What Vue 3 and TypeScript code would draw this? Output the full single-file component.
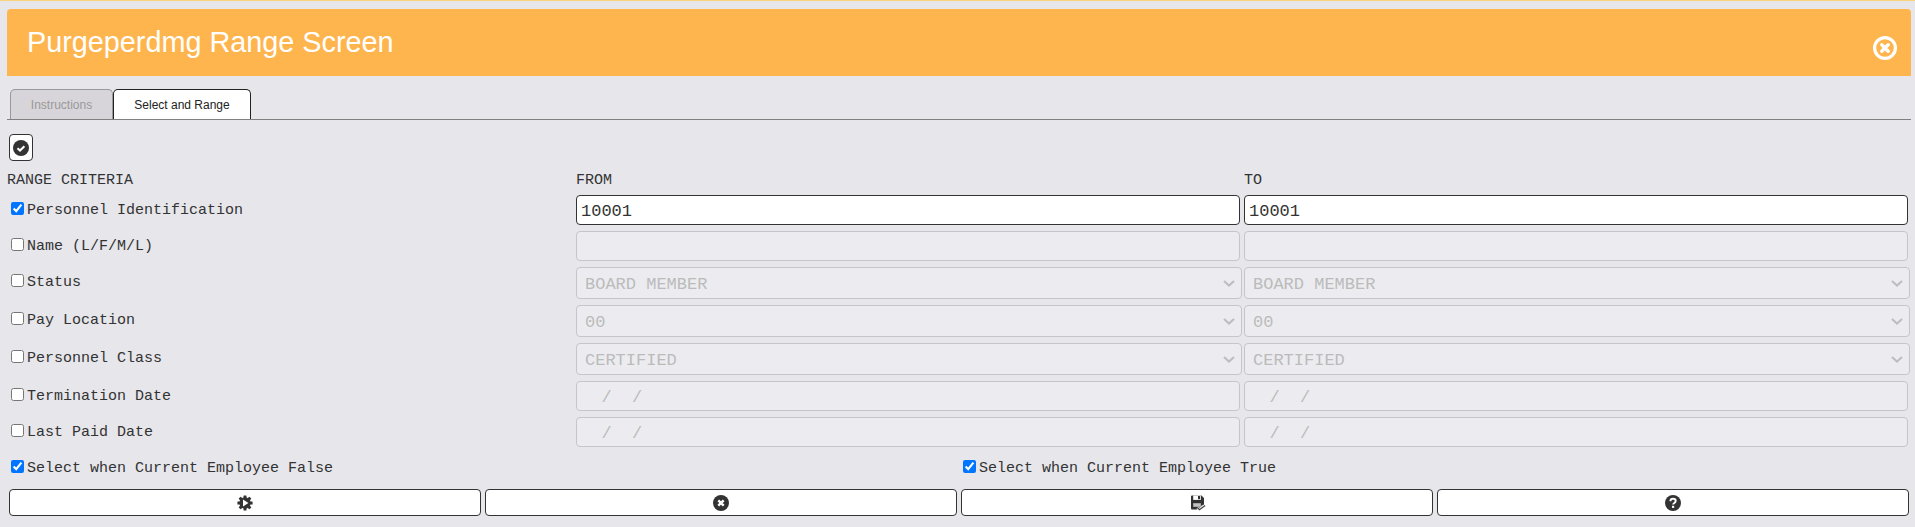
<script setup lang="ts">
interface Row {
  label: string
  kind: 'text' | 'select'
  value: string
  checked: boolean
}

const rows: Row[] = [
  { label: 'Personnel Identification', kind: 'text', value: '10001', checked: true },
  { label: 'Name (L/F/M/L)', kind: 'text', value: '', checked: false },
  { label: 'Status', kind: 'select', value: 'BOARD MEMBER', checked: false },
  { label: 'Pay Location', kind: 'select', value: '00', checked: false },
  { label: 'Personnel Class', kind: 'select', value: 'CERTIFIED', checked: false },
  { label: 'Termination Date', kind: 'text', value: '  /  /', checked: false },
  { label: 'Last Paid Date', kind: 'text', value: '  /  /', checked: false },
]
</script>

<template>
  <div class="page">
    <div class="strip"></div>
    <div class="main">
      <header class="banner">
        <h1 class="title">Purgeperdmg Range Screen</h1>
        <svg class="close" viewBox="0 0 24 24" width="24" height="24" aria-hidden="true">
          <circle cx="12" cy="12" r="10.4" fill="none" stroke="#fff" stroke-width="3.2" />
          <path d="M8.8 8.8l6.4 6.4M15.2 8.8l-6.4 6.4" fill="none" stroke="#fff" stroke-width="3.4" stroke-linecap="round" />
        </svg>
      </header>

      <nav class="tabs">
        <button class="tab" type="button">Instructions</button>
        <button class="tab active" type="button">Select and Range</button>
      </nav>

      <button class="check-all" type="button" aria-label="Select all">
        <svg viewBox="0 0 16 16" width="16" height="16" aria-hidden="true">
          <circle cx="8" cy="8" r="8" fill="#333" />
          <path d="M4.5 8.2l2.5 2.4 4.4-4.4" fill="none" stroke="#fff" stroke-width="2.1" />
        </svg>
      </button>

      <div class="grid">
        <div class="head">RANGE CRITERIA</div>
        <div class="head">FROM</div>
        <div class="head">TO</div>

        <template v-for="row in rows" :key="row.label">
          <label class="crit">
            <input type="checkbox" :checked="row.checked" />
            <span>{{ row.label }}</span>
          </label>
          <template v-for="side in 2" :key="side">
            <div v-if="row.kind === 'select'" class="selwrap">
              <select class="field sel" disabled>
                <option>{{ row.value }}</option>
              </select>
              <svg class="chev" viewBox="0 0 12 7" width="12" height="7" aria-hidden="true">
                <path d="M1 1l5 4.6L11 1" fill="none" stroke="#bdbdc0" stroke-width="2" />
              </svg>
            </div>
            <input
              v-else
              class="field txt"
              type="text"
              :value="row.value"
              :disabled="!row.checked"
            />
          </template>
        </template>
      </div>

      <div class="flags">
        <label class="crit">
          <input type="checkbox" checked />
          <span>Select when Current Employee False</span>
        </label>
        <label class="crit">
          <input type="checkbox" checked />
          <span>Select when Current Employee True</span>
        </label>
      </div>

      <div class="actions">
        <button class="act" type="button" aria-label="Run">
          <svg viewBox="0 0 16 16" width="16" height="16" aria-hidden="true">
            <g fill="#333">
              <rect x="6.5" y="0.4" width="3" height="15.2" rx="0.5" />
              <rect x="6.5" y="0.4" width="3" height="15.2" rx="0.5" transform="rotate(45 8 8)" />
              <rect x="6.5" y="0.4" width="3" height="15.2" rx="0.5" transform="rotate(90 8 8)" />
              <rect x="6.5" y="0.4" width="3" height="15.2" rx="0.5" transform="rotate(135 8 8)" />
              <circle cx="8" cy="8" r="5.7" />
            </g>
            <path d="M6 4.6l5.4 3.4-5.4 3.4z" fill="#fff" />
          </svg>
        </button>
        <button class="act" type="button" aria-label="Cancel">
          <svg viewBox="0 0 16 16" width="16" height="16" aria-hidden="true">
            <circle cx="8" cy="8" r="8" fill="#333" />
            <path d="M5.3 5.3l5.4 5.4M10.7 5.3l-5.4 5.4" fill="none" stroke="#fff" stroke-width="2.4" />
          </svg>
        </button>
        <button class="act save" type="button" aria-label="Save">
          <svg viewBox="0 0 16 16" width="16" height="16" aria-hidden="true">
            <path d="M2 0.5h9.5l2.5 2.5v7.5h-2.5v4h-9.5a1 1 0 0 1-1-1v-12a1 1 0 0 1 1-1z" fill="#333" />
            <rect x="3.2" y="0.5" width="7.6" height="4.4" fill="#fff" />
            <rect x="8" y="1" width="2" height="3.2" fill="#333" />
            <rect x="3.2" y="8.2" width="7.6" height="3.6" fill="#c4c4c4" />
            <path d="M7.6 12.8l1.9 1.9 5.6-4.3" fill="none" stroke="#fff" stroke-width="3" />
            <path d="M7.6 12.8l1.9 1.9 5.6-4.3" fill="none" stroke="#444" stroke-width="1.3" />
          </svg>
        </button>
        <button class="act" type="button" aria-label="Help">
          <svg viewBox="0 0 16 16" width="16" height="16" aria-hidden="true">
            <circle cx="8" cy="8" r="8" fill="#333" />
            <path d="M5.4 6.2c0-1.5 1.2-2.4 2.7-2.4s2.6.9 2.6 2.2c0 1.9-2.6 1.9-2.6 3.5" fill="none" stroke="#fff" stroke-width="1.9" />
            <rect x="7" y="10.8" width="2.2" height="2.1" fill="#fff" />
          </svg>
        </button>
      </div>
    </div>
  </div>
</template>

<style>
html,
body {
  margin: 0;
  background: #e6e6eb;
}
</style>

<style scoped>
.page {
  width: 1915px;
  height: 527px;
  overflow: hidden;
  background: #e6e6eb;
  color: #333;
  font-family: "Liberation Mono", monospace;
  font-size: 15px;
}
.strip {
  height: 1px;
  background: #f8d57e;
}
.main {
  margin: 8px 4px 0 7px;
}
.banner {
  display: flex;
  justify-content: space-between;
  height: 67px;
  padding: 0 14px 0 20px;
  box-sizing: border-box;
  background: #ffb54d;
  border-radius: 4px 4px 0 0;
}
.title {
  margin: 0;
  font-family: "Liberation Sans", sans-serif;
  font-size: 28.8px;
  font-weight: 400;
  line-height: 34px;
  padding-top: 16px;
  color: #fff;
}
.close {
  margin-top: 27px;
}
.tabs {
  display: flex;
  height: 30px;
  margin-top: 13px;
  padding-left: 3px;
  border-bottom: 1px solid #808080;
}
.tab {
  width: 103px;
  height: 30px;
  padding: 0;
  font-family: "Liberation Sans", sans-serif;
  font-size: 12px;
  color: #999;
  background: #d8d5da;
  border: 1px solid #999;
  border-bottom: 0;
  border-radius: 5px 5px 0 0;
}
.tab.active {
  width: 138px;
  color: #222;
  background: #fff;
  border-color: #222;
}
.check-all {
  display: flex;
  align-items: center;
  justify-content: center;
  width: 24px;
  height: 27px;
  margin: 14px 0 0 2px;
  padding: 0;
  background: #fff;
  border: 1px solid #333;
  border-radius: 4px;
}
.grid {
  display: grid;
  grid-template-columns: 565px 1fr 1fr;
  gap: 6px 4px;
  margin-top: 10px;
  padding-right: 3px;
}
.head {
  height: 18px;
  line-height: 19px;
}
.crit {
  display: flex;
  align-items: flex-start;
  line-height: 17px;
  padding-top: 7px;
  white-space: pre;
}
.crit input {
  width: 13px;
  height: 13px;
  margin: 0 3px 0 4px;
}
.field {
  box-sizing: border-box;
  width: 100%;
  margin: 0;
  font-family: "Liberation Mono", monospace;
  font-size: 17px;
  color: #333;
  background-color: #fff;
  border: 1px solid #333;
  border-radius: 4px;
  outline: none;
}
.txt {
  height: 30px;
  padding: 2px 4px 0;
  white-space: pre;
}
.txt:disabled {
  color: #bbb;
  background-color: #ececf0;
  border-color: #c6c6ca;
}
.selwrap {
  position: relative;
  height: 32px;
  margin-right: -2px;
}
.sel {
  display: block;
  height: 32px;
  padding: 2px 4px 0 8px;
  appearance: none;
}
.sel:disabled {
  color: #bbb;
  background-color: #ececf0;
  border-color: #c6c6ca;
  opacity: 1;
}
.chev {
  position: absolute;
  top: 13px;
  right: 7px;
  pointer-events: none;
}
.flags {
  display: grid;
  grid-template-columns: 952px 1fr;
  height: 30px;
  margin-top: 6px;
}
.actions {
  display: grid;
  grid-template-columns: repeat(4, 472px);
  gap: 4px;
  margin: 6px 0 0 2px;
}
.act {
  display: flex;
  align-items: center;
  justify-content: center;
  height: 27px;
  padding: 0;
  background: #fff;
  border: 1px solid #333;
  border-radius: 4px;
}
.save {
  padding-left: 2px;
}
</style>
